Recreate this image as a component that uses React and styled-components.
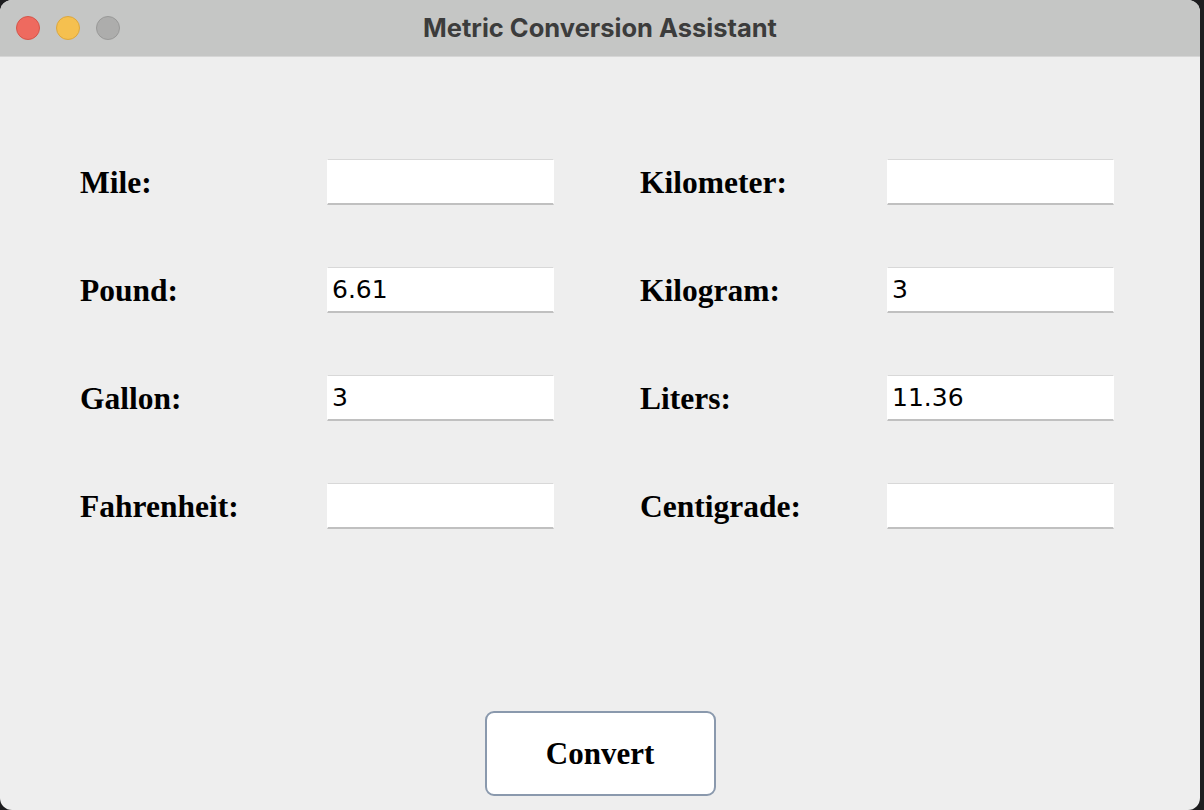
import React from "react";
import styled, { createGlobalStyle } from "styled-components";

const GlobalStyle = createGlobalStyle`
  html, body {
    margin: 0;
    padding: 0;
    background: #1d1d1f;
    overflow: hidden;
  }
  * {
    box-sizing: border-box;
  }
`;

const fields = [
  { label: "Mile:", value: "" },
  { label: "Kilometer:", value: "" },
  { label: "Pound:", value: "6.61" },
  { label: "Kilogram:", value: "3" },
  { label: "Gallon:", value: "3" },
  { label: "Liters:", value: "11.36" },
  { label: "Fahrenheit:", value: "" },
  { label: "Centigrade:", value: "" },
];

const lights = ["#ee6a5f", "#f5c04f", "#adadac"];
const lightBorders = ["#d5554a", "#dca73e", "#999998"];

export default function App() {
  return (
    <>
      <GlobalStyle />
      <Window>
        <TitleBar>
          <Lights>
            {lights.map((c, i) => (
              <Light key={c} $color={c} $border={lightBorders[i]} />
            ))}
          </Lights>
          <Title>Metric Conversion Assistant</Title>
        </TitleBar>
        <Content>
          <Fields>
            {fields.map((f) => (
              <Field key={f.label}>
                <Label>{f.label}</Label>
                <Input defaultValue={f.value} />
              </Field>
            ))}
          </Fields>
          <Footer>
            <ConvertButton>Convert</ConvertButton>
          </Footer>
        </Content>
      </Window>
    </>
  );
}

const Window = styled.div`
  width: 1200px;
  height: 810px;
  background: #eeeeee;
  border-radius: 12px;
  overflow: hidden;
  display: flex;
  flex-direction: column;
`;

const TitleBar = styled.div`
  height: 57px;
  flex-shrink: 0;
  background: #c5c6c5;
  border-bottom: 1px solid #d6d6d6;
  display: grid;
  grid-template-columns: 1fr auto 1fr;
  align-items: center;
`;

const Lights = styled.div`
  display: flex;
  gap: 16px;
  padding-left: 16px;
`;

const Light = styled.span`
  width: 24px;
  height: 24px;
  border-radius: 50%;
  background: ${(p) => p.$color};
  border: 1px solid ${(p) => p.$border};
`;

const Title = styled.div`
  font-family: Inter, "Liberation Sans", sans-serif;
  font-weight: 700;
  font-size: 25.5px;
  color: #3c3c3c;
  margin-top: -2px;
`;

const Content = styled.div`
  flex: 1;
  display: flex;
  flex-direction: column;
  padding: 102px 0 14px 80px;
`;

const Fields = styled.div`
  display: grid;
  grid-template-columns: repeat(2, 474px);
  column-gap: 86px;
  row-gap: 62px;
`;

const Field = styled.div`
  display: grid;
  grid-template-columns: 247px 227px;
  align-items: center;
`;

const Label = styled.label`
  font-family: "Liberation Serif", "Times New Roman", serif;
  font-weight: 700;
  font-size: 31.5px;
  color: #000;
  margin-top: 1px;
`;

const Input = styled.input`
  width: 227px;
  height: 46px;
  background: #ffffff;
  border: 1px solid #ffffff;
  border-top-color: #d8d8d8;
  border-bottom: 2px solid #c0c0c0;
  border-radius: 0;
  padding: 0 0 0 4px;
  font-family: "DejaVu Sans", Verdana, sans-serif;
  font-size: 25px;
  color: #000;
  outline: none;
`;

const Footer = styled.div`
  margin-top: auto;
  margin-left: -80px;
  display: flex;
  justify-content: center;
`;

const ConvertButton = styled.button`
  width: 231px;
  height: 85px;
  background: #ffffff;
  border: 2.5px solid #8a99ad;
  border-radius: 9px;
  font-family: "Liberation Serif", "Times New Roman", serif;
  font-weight: 700;
  font-size: 31px;
  color: #000;
  cursor: pointer;
`;
